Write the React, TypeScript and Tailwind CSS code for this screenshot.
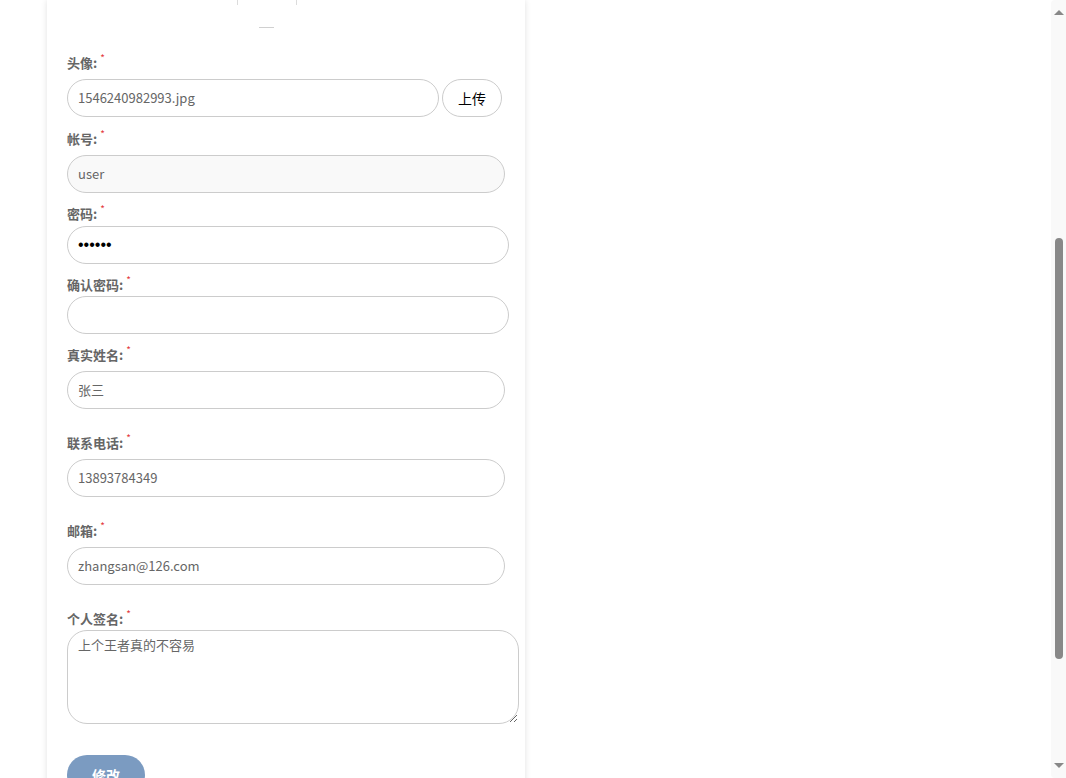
import React from "react";

const font = { fontFamily: '"Noto Sans CJK SC", "Noto Sans", sans-serif' };

function Label({ text, mt }: { text: string; mt: string }) {
  return (
    <div className={`${mt} h-[16px] flex items-center text-[13px] font-bold text-[#666] leading-[16px]`}>
      <span>{text}:</span>
      <span className="text-[#e4393c] text-[10px] font-normal ml-[3px] relative top-[-5px]">*</span>
    </div>
  );
}

export default function App() {
  return (
    <div className="relative h-[778px] w-[1066px] overflow-hidden bg-white" style={font}>
      <div className="ml-[47px] w-[478px] h-[900px] bg-white shadow-[0_0_6px_rgba(0,0,0,0.12)] pl-[20px] relative">
        {/* avatar remnants at top */}
        <div className="absolute left-[190px] top-0 w-[60px] h-[5px] border-l border-r border-[#dcdcdc]" />
        <div className="absolute left-[212px] top-[27px] w-[15px] h-[1px] bg-[#d0d0d0]" />

        <div className="h-[55px]" />
        <Label text="头像" mt="mt-0" />
        <div className="mt-[8px] flex gap-[3px]">
          <div className="w-[372px] h-[38px] rounded-full border border-[#ccc] flex items-center pl-[10px] text-[13px] text-[#666]">
            1546240982993.jpg
          </div>
          <button className="w-[60px] h-[38px] rounded-full border border-[#ccc] bg-white text-[14px] text-black">
            上传
          </button>
        </div>

        <Label text="帐号" mt="mt-[14px]" />
        <div className="mt-[8px] w-[438px] h-[38px] rounded-full border border-[#ccc] bg-[#f9f9f9] flex items-center pl-[10px] text-[13px] text-[#666]">
          user
        </div>

        <Label text="密码" mt="mt-[13px]" />
        <div
          className="mt-[4px] w-[442px] h-[38px] rounded-full border border-[#ccc] bg-white flex items-center pl-[10px] text-[16px] text-black"
          style={{ fontFamily: '"Liberation Sans", Arial, sans-serif' }}
        >
          ••••••
        </div>

        <Label text="确认密码" mt="mt-[13px]" />
        <div className="mt-[3px] w-[442px] h-[38px] rounded-full border border-[#ccc] bg-white" />

        <Label text="真实姓名" mt="mt-[13px]" />
        <div className="mt-[8px] w-[438px] h-[38px] rounded-full border border-[#ccc] bg-white flex items-center pl-[10px] text-[13px] text-[#666]">
          张三
        </div>

        <Label text="联系电话" mt="mt-[26px]" />
        <div className="mt-[8px] w-[438px] h-[38px] rounded-full border border-[#ccc] bg-white flex items-center pl-[10px] text-[13px] text-[#666]">
          13893784349
        </div>

        <Label text="邮箱" mt="mt-[26px]" />
        <div className="mt-[8px] w-[438px] h-[38px] rounded-full border border-[#ccc] bg-white flex items-center pl-[10px] text-[13px] text-[#666]">
          zhangsan@126.com
        </div>

        <Label text="个人签名" mt="mt-[26px]" />
        <textarea
          className="mt-[3px] block w-[452px] h-[94px] rounded-[20px] border border-[#ccc] bg-white pl-[10px] pt-[4px] text-[13px] text-[#666] outline-none"
          style={font}
          defaultValue="上个王者真的不容易"
        />

        <button className="mt-[31px] w-[78px] h-[40px] rounded-full bg-[#7b9bc1] text-white text-[14px] font-bold">
          修改
        </button>
      </div>

      {/* fake scrollbar */}
      <div className="absolute right-0 top-0 w-[15px] h-[778px] bg-[#f9f9f9] rounded-tl-[4px] rounded-bl-[4px]">
        <div className="absolute left-[3px] top-[10px] w-0 h-0 border-l-[5px] border-r-[5px] border-b-[5px] border-l-transparent border-r-transparent border-b-[#888]" />
        <div className="absolute left-[4px] top-[238px] w-[8px] h-[421px] rounded-full bg-[#888]" />
        <div className="absolute left-[3px] top-[763px] w-0 h-0 border-l-[5px] border-r-[5px] border-t-[5px] border-l-transparent border-r-transparent border-t-[#888]" />
      </div>
    </div>
  );
}
